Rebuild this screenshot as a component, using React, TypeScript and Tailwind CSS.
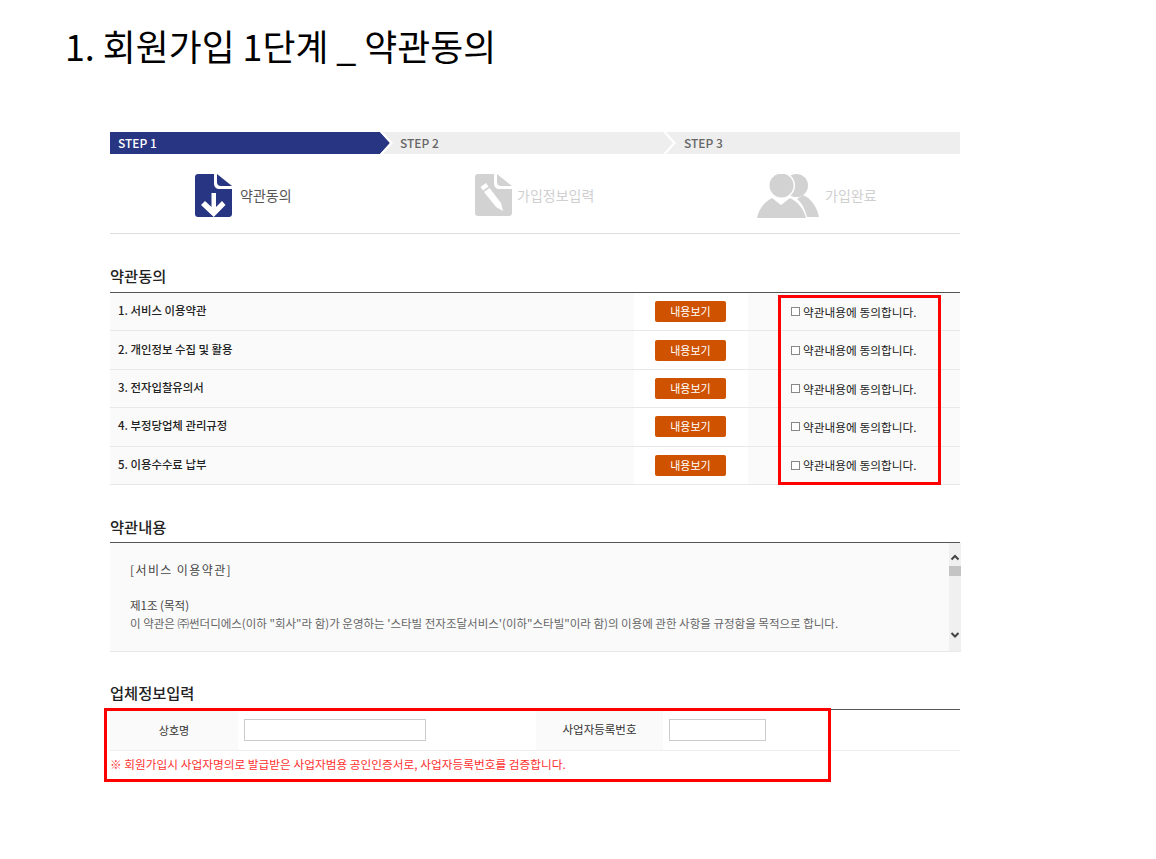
const font = { fontFamily: '"Noto Sans CJK KR", "Noto Sans", sans-serif' };

const terms = ["1. 서비스 이용약관", "2. 개인정보 수집 및 활용", "3. 전자입찰유의서", "4. 부정당업체 관리규정", "5. 이용수수료 납부"];

function DocIcon() {
  return (
    <svg width="37" height="43" viewBox="0 0 37 43" className="shrink-0">
      <path d="M3 0H19V9C19 13 21 15 25 15H37V40C37 41.7 35.7 43 34 43H3C1.3 43 0 41.7 0 40V3C0 1.3 1.3 0 3 0Z" fill="#273583" />
      <path d="M22 0L37 12H26C23.5 12 22 10.5 22 8Z" fill="#273583" />
      <path d="M16.500 19H21V33L27 27L30.500 31L18.750 43L6 31L10 27L16.500 33Z" fill="#fff" />
    </svg>
  );
}

function PencilIcon() {
  return (
    <svg width="37" height="42" viewBox="0 0 37 42" className="shrink-0 -mt-[2px]">
      <path d="M3 0H19V9C19 13 21 15 25 15H37V39C37 40.700 35.700 42 34 42H3C1.300 42 0 40.700 0 39V3C0 1.300 1.300 0 3 0Z" fill="#d2d2d2" />
      <path d="M22 0L37 12H26C23.500 12 22 10.500 22 8Z" fill="#d2d2d2" />
      <path d="M5.500 13L11 9L13.500 12.500L8 16.500ZM9 18L14.500 14L26 29L28 37L21 33Z" fill="#fff" />
    </svg>
  );
}

function UsersIcon() {
  return (
    <svg width="62" height="44" viewBox="0 0 62 44" className="shrink-0">
      <circle cx="39.500" cy="11.500" r="11.500" fill="#d2d2d2" />
      <path d="M46 21C54 24 60 33 62 43H50C48 35 45 29 40 25Z" fill="#d2d2d2" />
      <circle cx="24.500" cy="11.500" r="13.500" fill="#fff" />
      <circle cx="24.500" cy="11.500" r="12" fill="#d2d2d2" />
      <path d="M15 24L24 31L33 24C41 28 47 35 49 44H0C2 35 7 28 15 24Z" fill="#d2d2d2" />
    </svg>
  );
}

function SectionTitle({ children, tight }: { children: string; tight?: boolean }) {
  return (
    <h2 className={tight ? "text-[15.300px] leading-[22px] font-medium text-[#222] border-b border-[#555] pb-[5px]" : "text-[15.300px] leading-[22px] font-medium text-[#222] border-b border-[#555] pb-[6px]"}>
      {children}
    </h2>
  );
}

export default function App() {
  return (
    <div className="relative w-[1156px] h-[859px] bg-white overflow-hidden" style={font}>
      <h1 className="pl-[65px] pt-[22px] text-[35.800px] leading-[46px] text-black font-normal">1. 회원가입 1단계 _ 약관동의</h1>

      <main className="ml-[110px] mt-[64px] w-[850px]">
        <div className="relative h-[22px] bg-[#eeeeee] flex text-[12px] leading-[22px] font-medium text-[#666]">
          <svg width="850" height="22" className="absolute left-0 top-0">
            <path d="M0 0H270L280 11L270 22H0Z" fill="#273583" />
            <path d="M270 0H273L283 11L273 22H270L280 11Z" fill="#fff" />
            <path d="M553 0H556L566 11L556 22H553L563 11Z" fill="#fff" />
          </svg>
          <span className="relative w-[290px] pl-[8px] text-white">STEP 1</span>
          <span className="relative w-[284px]">STEP 2</span>
          <span className="relative">STEP 3</span>
        </div>

        <div className="flex h-[80px] pt-[4px] border-b border-[#dddddd] items-center text-[14px]">
          <div className="w-[280px] pl-[85px] flex items-center gap-[8px] text-[#555]"><DocIcon />약관동의</div>
          <div className="w-[282px] pl-[85px] flex items-center gap-[5px] text-[#cfcfcf]"><PencilIcon />가입정보입력</div>
          <div className="pl-[85px] flex items-center gap-[6px] text-[#cfcfcf]"><UsersIcon />가입완료</div>
        </div>

        <section className="mt-[30px]">
          <SectionTitle>약관동의</SectionTitle>
          <div>
            {terms.map((t) => (
              <div key={t} className="flex h-[38.400px] border-b border-[#e8e8e8] bg-[#fafafa] items-stretch">
                <div className="w-[524px] pl-[8px] pb-[2px] flex items-center font-medium text-[11.400px] text-[#222]">{t}</div>
                <div className="w-[114px] bg-white flex items-center pl-[21px]">
                  <button className="w-[71px] h-[21px] bg-[#cf5200] rounded-[2px] text-white text-[11px] leading-[21px]">내용보기</button>
                </div>
                <div className="flex-1 pl-[43px] flex items-center gap-[3px] text-[11.700px] text-[#222]">
                  <span className="w-[9px] h-[9px] border border-[#888] bg-white" />
                  약관내용에 동의합니다.
                </div>
              </div>
            ))}
          </div>
        </section>

        <section className="mt-[30px]">
          <SectionTitle tight>약관내용</SectionTitle>
          <div className="flex w-[851px] h-[109px] bg-[#fafafa] border-b border-[#e8e8e8]">
            <div className="flex-1 pl-[20px] text-[11.500px] text-[#666]">
              <p className="mt-[18px] text-[12px] leading-[18px] text-[#444] tracking-[1.400px]">[서비스 이용약관]</p>
              <p className="mt-[18px] leading-[16px] text-[#444]">제1조 (목적)</p>
              <p className="leading-[18px] pt-[1px]">이 약관은 ㈜썬더디에스(이하 "회사"라 함)가 운영하는 '스타빌 전자조달서비스'(이하"스타빌"이라 함)의 이용에 관한 사항을 규정함을 목적으로 합니다.</p>
            </div>
            <div className="w-[12px] bg-[#f0f0f0] flex flex-col items-center">
              <svg width="12" height="23" viewBox="0 0 12 23" className="shrink-0"><path d="M2.500 16.500L6 13L9.500 16.500" fill="none" stroke="#444" strokeWidth="2" /></svg>
              <div className="w-[12px] h-[10px] bg-[#c4c4c4]" />
              <div className="flex-1" />
              <svg width="12" height="26" viewBox="0 0 12 26" className="shrink-0"><path d="M2.500 8L6 11.500L9.500 8" fill="none" stroke="#444" strokeWidth="2" /></svg>
            </div>
          </div>
        </section>

        <section className="mt-[29px]">
          <SectionTitle>업체정보입력</SectionTitle>
          <div className="flex h-[41px] border-b border-[#eeeeee] items-stretch text-[11px] text-[#333]">
            <div className="w-[128px] bg-[#fafafa] flex items-center justify-center">상호명</div>
            <div className="w-[298px] pl-[6px] flex items-center">
              <input className="w-[182px] h-[22px] border border-[#cccccc] bg-white" />
            </div>
            <div className="w-[127px] bg-[#fafafa] flex items-center justify-center text-[11.500px]">사업자등록번호</div>
            <div className="pl-[6px] flex items-center">
              <input className="w-[97px] h-[22px] border border-[#cccccc] bg-white" />
            </div>
          </div>
          <p className="mt-[3px] text-[11.700px] leading-[20px] text-[#ff3030]">※ 회원가입시 사업자명의로 발급받은 사업자범용 공인인증서로, 사업자등록번호를 검증합니다.</p>
        </section>
      </main>

      <div className="absolute left-[778px] top-[295px] w-[163px] h-[190px] border-[3px] border-[#ff0000]" />
      <div className="absolute left-[104px] top-[708px] w-[727px] h-[74px] border-[3px] border-[#ff0000]" />
    </div>
  );
}
